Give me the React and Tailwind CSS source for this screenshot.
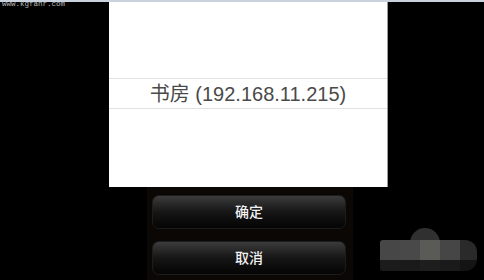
export default function App() {
  return (
    <div className="relative h-[280px] w-[484px] overflow-hidden border-t-2 border-[#c9d3de] bg-black font-['Liberation_Sans','Noto_Sans_CJK_SC',sans-serif]">
      <div className="absolute left-[2px] top-[-2px] z-10 font-['Liberation_Mono',monospace] text-[7.5px] leading-[9px] text-[#b8b8b8]">
        www.kgfanr.com
      </div>

      <div className="ml-[109px] flex h-[185px] w-[279px] flex-col border-r border-[#9a9a9a] bg-white">
        <div className="h-[76px]" />
        <div className="flex h-[31px] items-center justify-center border-y border-[#e2e2e2] text-[20px] text-[#4a4a4a]">
          书房 (192.168.11.215)
        </div>
      </div>

      <div className="ml-[147px] flex h-[93px] w-[206px] flex-col gap-[12px] bg-[#0b0704] px-[5px] pt-[8px]">
        <button
          type="button"
          className="flex h-[34px] w-[194px] items-center justify-center rounded-[7px] border border-[#1c1c1c] bg-gradient-to-b from-[#3c3c3c] via-[#161616] to-[#050505] text-[14px] font-medium text-[#f2f2f2]"
        >
          确定
        </button>
        <button
          type="button"
          className="flex h-[34px] w-[194px] items-center justify-center rounded-[7px] border border-[#1c1c1c] bg-gradient-to-b from-[#3c3c3c] via-[#161616] to-[#050505] text-[14px] font-medium text-[#f2f2f2]"
        >
          取消
        </button>
      </div>

      {/* mosaic blur over bottom right */}
      <div className="absolute left-[410px] top-[226px] h-[30px] w-[30px] rounded-full bg-[#303030]" />
      <div className="absolute left-[380px] top-[238px] flex h-[31px] w-[97px] flex-col overflow-hidden rounded-r-[12px] rounded-l-[3px]">
        <div className="flex h-[20px]">
          <div className="w-[20px] bg-[#474747]" />
          <div className="w-[20px] bg-[#494949]" />
          <div className="w-[20px] bg-[#5a5a57]" />
          <div className="w-[20px] bg-[#464646]" />
          <div className="w-[17px] bg-[#2a2a2a]" />
        </div>
        <div className="flex h-[11px]">
          <div className="w-[20px] bg-[#1b1b1b]" />
          <div className="w-[20px] bg-[#1a1a1a]" />
          <div className="w-[20px] bg-[#1e1e1e]" />
          <div className="w-[20px] bg-[#1a1a1a]" />
          <div className="w-[17px] bg-[#141414]" />
        </div>
      </div>
    </div>
  )
}
